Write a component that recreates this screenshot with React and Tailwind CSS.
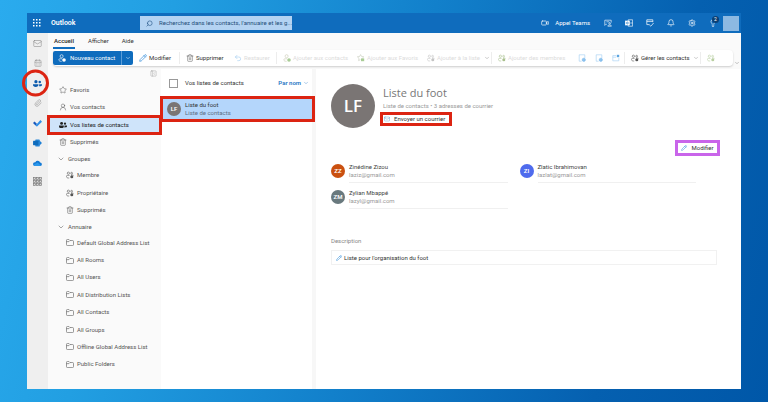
import {
  Bell,
  CalendarDays,
  ChevronDown,
  Lightbulb,
  Mail,
  PanelLeftClose,
  Paperclip,
  Pencil,
  Search,
  Settings,
  Star,
  Trash2,
  Undo2,
  UserRound,
  Video,
} from "lucide-react";

const Waffle = () => (
  <svg viewBox="0 0 8 8" className="size-2 fill-current" aria-hidden="true">
    {[0, 3, 6].map((y) =>
      [0, 3, 6].map((x) => <rect key={`${x}-${y}`} x={x} y={y} width="1.5" height="1.5" />)
    )}
  </svg>
);

const People = ({ className = "size-[9px]" }) => (
  <svg viewBox="0 0 20 16" className={`${className} fill-current`} aria-hidden="true">
    <circle cx="6.5" cy="4" r="3.6" />
    <path d="M0 9.5h12v2c0 2.5-2 4-6 4s-6-1.5-6-4z" />
    <circle cx="15" cy="4.6" r="2.8" />
    <path d="M13.8 9.5H20v1.6c0 2-1.8 3.2-6.8 3 .6-1 .6-2.6.6-4.6z" />
  </svg>
);

// outlined pair of people with a small badge in the corner
const PeopleBadge = ({ className = "" }) => (
  <svg viewBox="0 0 20 18" className={`size-2 shrink-0 ${className}`} fill="none" stroke="currentColor" strokeWidth="1.5" aria-hidden="true">
    <circle cx="6" cy="4.5" r="2.8" />
    <circle cx="14" cy="4.5" r="2.2" />
    <path d="M9 10H3.5C2 10 1 11 1 12.5 1 15 3 16.500 6 16.500h2M12.500 9h4c1.500 0 2 .6 2 1.500" />
    <circle cx="14.5" cy="13.5" r="3.8" fill="currentColor" stroke="none" />
  </svg>
);

const PersonAdd = ({ className = "", badge = "currentColor" }) => (
  <svg viewBox="0 0 20 20" className={`size-2 shrink-0 ${className}`} fill="none" stroke="currentColor" strokeWidth="1.6" aria-hidden="true">
    <circle cx="9" cy="5.5" r="3.8" />
    <path d="M10 12H4.5C3 12 2 13 2 14.5 2 17 5 18.5 9 18.5" />
    <circle cx="15" cy="15" r="4.5" fill={badge} stroke="none" />
  </svg>
);

const StarAdd = () => (
  <svg viewBox="0 0 20 20" className="size-2 shrink-0" fill="none" stroke="#c5c9b8" strokeWidth="1.5" aria-hidden="true">
    <path d="M13 11l4-4-5.5-.8L9 1.5 6.5 6.2 1 7l4 4-1 5.5 4.5-2.5" />
    <rect x="10" y="11" width="8" height="7" fill="#a9cc96" stroke="none" />
  </svg>
);

const CardAction = ({ out }) => (
  <svg viewBox="0 0 20 20" className="size-2" fill="none" stroke="#a5cff2" strokeWidth="1.6" aria-hidden="true">
    {out ? (
      <>
        <path d="M10 4H2v13h15v-7M2 8h8" />
        <path d="M12 2h6v6h-6z" fill="#5ba5e0" stroke="none" />
      </>
    ) : (
      <>
        <path d="M9 18H3V2h14v8" />
        <circle cx="14.5" cy="14.5" r="4" fill="#8fc3ee" stroke="#7db8ea" />
      </>
    )}
  </svg>
);

const TodoLogo = () => (
  <svg viewBox="0 0 20 16" className="h-2 w-[9px]" aria-hidden="true">
    <path d="M0 8l3.5-3.5L9 10l-3.5 3.5z" fill="#185abd" />
    <path d="M5.5 13.5L16.5 1.5 20 5 9 16H8z" fill="#2f8fe8" />
  </svg>
);

const TeamsLogo = () => (
  <svg viewBox="0 0 20 18" className="h-2 w-[9px]" aria-hidden="true">
    <rect x="5" y="1" width="10" height="16" rx="1" fill="#2b88d8" />
    <rect x="0" y="4" width="12" height="10" rx="1" fill="#0f6cbd" />
    <path d="M14 3l6 6-6 6z" fill="#1b7fd6" />
  </svg>
);

const CloudLogo = () => (
  <svg viewBox="0 0 20 14" className="h-[6px] w-[9px]" aria-hidden="true">
    <path d="M5 5a6 6 0 0111 1 4 4 0 01.5 8H4A4.2 4.2 0 014 5z" fill="#1378d4" />
    <path d="M1 11l9-5 8 6a4 4 0 01-2 2H4a4 4 0 01-3-3z" fill="#2a97ea" />
  </svg>
);

const AppsGrid = () => (
  <svg viewBox="0 0 18 18" className="size-[9px]" fill="#d8d8d8" stroke="#777" strokeWidth="1.3" aria-hidden="true">
    {[1, 7, 13].map((y) =>
      [1, 7, 13].map((x) => <rect key={`${x}-${y}`} x={x} y={y} width="4" height="4" />)
    )}
  </svg>
);

const OutlookLogo = () => (
  <svg viewBox="0 0 20 20" className="size-2" fill="none" stroke="currentColor" strokeWidth="1.6" aria-hidden="true">
    <rect x="1" y="5" width="10" height="10" fill="currentColor" />
    <circle cx="6" cy="10" r="2.3" stroke="#0f6cbd" />
    <path d="M8 5V2h11v16H8v-3M13 10h6" />
  </svg>
);

const ChatPerson = () => (
  <svg viewBox="0 0 20 18" className="size-2" fill="none" stroke="currentColor" strokeWidth="1.6" aria-hidden="true">
    <path d="M7 12H5l-3 3V2h16v6M6 6h7" />
    <circle cx="14" cy="10" r="2" />
    <path d="M9.5 17c0-2 1.5-3 4.5-3s4.5 1 4.5 3z" />
  </svg>
);

const DayCheck = () => (
  <svg viewBox="0 0 20 20" className="size-2" fill="none" stroke="currentColor" strokeWidth="1.8" aria-hidden="true">
    <path d="M8 14H2V2h15v6M2 6h15" />
    <path d="M8 14l4 4 7-8" />
  </svg>
);

const FolderTab = () => (
  <svg viewBox="0 0 18 16" className="h-[7px] w-2 shrink-0" fill="none" stroke="#666" strokeWidth="1.5" aria-hidden="true">
    <path d="M1 3c0-1 .5-2 2-2h3.500L9 3.500h6c1.300 0 2 .7 2 2V13c0 1.300-.7 2-2 2H3c-1.300 0-2-.7-2-2zM1 6h5.500L9 3.500" />
  </svg>
);

const ToolSeparator = () => <span className="h-3 w-px shrink-0 bg-[#ededed]" />;

function Tool({ icon, label, width, muted, chevron }) {
  return (
    <button
      type="button"
      className={`flex h-4 shrink-0 items-center gap-[2px] pl-[6px] whitespace-nowrap ${width} ${muted ? "text-[#dcdcdc]" : "text-[#333]"}`}
    >
      {icon}
      {label}
      {chevron && <ChevronDown className="ml-[2px] size-[6px] text-[#999]" />}
    </button>
  );
}

function NavRow({ icon, label, nested, active }) {
  return (
    <li className="flex flex-1">
      <a
        href="#"
        className={`flex flex-1 items-center gap-[3px] whitespace-nowrap ${nested ? "pl-[18px]" : "pl-[11px]"} ${
          active ? "relative bg-[#cfe4fa] text-[#222] outline-3 -outline-offset-2 outline-[#dc2412]" : ""
        }`}
      >
        {icon}
        {label}
      </a>
    </li>
  );
}

function NavHeading({ label }) {
  return (
    <button type="button" className="flex h-[15px] items-center gap-[3px] pl-[9px]">
      <ChevronDown className="size-2" strokeWidth={1.5} />
      {label}
    </button>
  );
}

const addressLists = [
  "Default Global Address List",
  "All Rooms",
  "All Users",
  "All Distribution Lists",
  "All Contacts",
  "All Groups",
  "Offline Global Address List",
  "Public Folders",
];

const members = [
  { initials: "ZZ", name: "Zinédine Zizou", email: "laziz@gmail.com", color: "bg-[#ca5010]" },
  { initials: "ZI", name: "Zlatic Ibrahimovan", email: "lazlat@gmail.com", color: "bg-[#4f6bed]" },
  { initials: "ZM", name: "Zylian Mbappé", email: "lazyl@gmail.com", color: "bg-[#69797e]" },
];

function Header() {
  return (
    <header className="flex h-5 items-center bg-[#0f6cbd] pr-[2px] text-white">
      <button type="button" aria-label="Applications" className="flex w-6 justify-center pr-1">
        <Waffle />
      </button>
      <span className="w-[89px] text-[7px] font-semibold">Outlook</span>
      <label className="flex h-[14px] w-[152px] items-center gap-[6px] bg-[#b4d3f2] pl-[6px] text-[#1f4f82]">
        <Search className="size-[7px] shrink-0 -scale-x-100" />
        <input
          type="text"
          aria-label="Rechercher"
          placeholder="Recherchez dans les contacts, l'annuaire et les g..."
          className="min-w-0 flex-1 placeholder:text-[#244d78] outline-none"
        />
      </label>
      <button type="button" className="ml-auto flex items-center gap-[6px] pr-[7px] whitespace-nowrap">
        <Video className="size-2" />
        Appel Teams
      </button>
      {[
        { label: "Conversations", icon: <ChatPerson /> },
        { label: "Outlook", icon: <OutlookLogo /> },
        { label: "Ma journée", icon: <DayCheck /> },
        { label: "Notifications", icon: <Bell className="size-2" /> },
        { label: "Paramètres", icon: <Settings className="size-2" /> },
      ].map((item) => (
        <button key={item.label} type="button" aria-label={item.label} className="flex w-[21px] justify-center">
          {item.icon}
        </button>
      ))}
      <button type="button" aria-label="Conseils" className="relative flex w-[21px] justify-center">
        <Lightbulb className="size-2" />
        <span className="absolute -top-[3px] right-1 flex size-[7px] items-center justify-center rounded-full bg-[#0b3f73] text-[5px] leading-none">
          2
        </span>
      </button>
      <span className="h-[15px] w-4 bg-[#8db9e2]" />
    </header>
  );
}

function Rail() {
  return (
    <nav aria-label="Modules" className="flex w-[21px] shrink-0 flex-col items-center bg-[#efefef] text-[#8a8a8a]">
      <a href="#" aria-label="Courrier" className="flex h-5 items-center">
        <Mail className="size-[9px]" strokeWidth={1.5} />
      </a>
      <a href="#" aria-label="Calendrier" className="flex h-5 items-center">
        <CalendarDays className="size-2" strokeWidth={1.5} />
      </a>
      <a href="#" aria-label="Contacts" className="relative z-10 flex h-5 items-center text-[#0f5cad]">
        <People />
        <span className="absolute top-1/2 -left-[11px] size-[27px] -translate-y-1/2 rounded-full border-3 border-[#dc2412]" />
      </a>
      <a href="#" aria-label="Fichiers" className="flex h-5 items-center">
        <Paperclip className="size-2" strokeWidth={1.5} />
      </a>
      <a href="#" aria-label="To Do" className="flex h-5 items-center">
        <TodoLogo />
      </a>
      <a href="#" aria-label="Teams" className="flex h-5 items-center">
        <TeamsLogo />
      </a>
      <a href="#" aria-label="OneDrive" className="flex h-5 items-center">
        <CloudLogo />
      </a>
      <a href="#" aria-label="Plus d'applications" className="flex h-4 items-center">
        <AppsGrid />
      </a>
    </nav>
  );
}

function Ribbon() {
  return (
    <div className="bg-[#fafafa] pb-[3px] pl-[5px]">
      <div className="flex h-[17px] items-center gap-[13px] text-[#333]">
        <button type="button" className="border-b-2 border-[#0f6cbd] px-[1px] leading-3 font-semibold">
          Accueil
        </button>
        <button type="button" className="border-b-2 border-transparent leading-3">
          Afficher
        </button>
        <button type="button" className="border-b-2 border-transparent leading-3">
          Aide
        </button>
      </div>
      <div className="flex items-end">
        <div className="flex h-4 min-w-0 flex-1 items-center rounded-sm bg-white shadow-[0_1px_2px_rgba(0,0,0,0.18)]">
          <div className="flex h-[14px] w-20 shrink-0 overflow-hidden rounded-[2px] bg-[#0f6cbd] text-white">
            <button type="button" className="flex flex-1 items-center gap-1 pl-[5px] whitespace-nowrap">
              <PersonAdd badge="#fff" />
              Nouveau contact
            </button>
            <button type="button" aria-label="Autres types" className="flex w-3 items-center justify-center border-l border-[#5c9dd8]">
              <ChevronDown className="size-[6px]" />
            </button>
          </div>
          <Tool width="w-[46px]" label="Modifier" icon={<Pencil className="size-2 text-[#2b88d8]" />} />
          <ToolSeparator />
          <Tool width="w-12" label="Supprimer" icon={<Trash2 className="size-2 text-[#555]" strokeWidth={1.5} />} />
          <Tool width="w-12" muted label="Restaurer" icon={<Undo2 className="size-2 text-[#a9d0f2]" />} />
          <ToolSeparator />
          <Tool width="w-[74px]" muted label="Ajouter aux contacts" icon={<PersonAdd className="text-[#cdcdb8]" badge="#a9cc96" />} />
          <Tool width="w-[70px]" muted label="Ajouter aux Favoris" icon={<StarAdd />} />
          <Tool width="w-[70px]" muted chevron label="Ajouter à la liste" icon={<PeopleBadge className="text-[#c4c4c4]" />} />
          <ToolSeparator />
          <Tool width="w-[81px]" muted label="Ajouter des membres" icon={<PeopleBadge className="text-[#a9c08e]" />} />
          {["Modifier la carte", "Supprimer la carte", "Partager"].map((label) => (
            <button key={label} type="button" aria-label={label} className="flex w-[17px] shrink-0 justify-center">
              <CardAction out={label === "Partager"} />
            </button>
          ))}
          <ToolSeparator />
          <Tool width="w-[75px]" chevron label="Gérer les contacts" icon={<PeopleBadge className="text-[#555]" />} />
          <ToolSeparator />
          <button type="button" aria-label="Groupe" className="flex shrink-0 pl-[6px]">
            <PeopleBadge className="text-[#b9cfa2]" />
          </button>
        </div>
        <button type="button" aria-label="Options du ruban" className="flex w-2 justify-center">
          <ChevronDown className="size-[6px] text-[#888]" />
        </button>
      </div>
    </div>
  );
}

function Sidebar() {
  return (
    <nav aria-label="Dossiers" className="flex w-[113px] shrink-0 flex-col bg-[#fafafa] pb-4 text-[#555]">
      <button type="button" aria-label="Réduire" className="flex h-3 items-start self-end pt-px pr-1">
        <PanelLeftClose className="size-[7px] text-[#999]" strokeWidth={1.5} />
      </button>
      <ul className="flex h-[70px] flex-col">
        <NavRow label="Favoris" icon={<Star className="size-2" strokeWidth={1.5} />} />
        <NavRow label="Vos contacts" icon={<UserRound className="size-2" strokeWidth={1.5} />} />
        <NavRow active label="Vos listes de contacts" icon={<People className="size-2" />} />
        <NavRow label="Supprimés" icon={<Trash2 className="size-2" strokeWidth={1.5} />} />
      </ul>
      <NavHeading label="Groupes" />
      <ul className="flex h-[53px] flex-col">
        <NavRow nested label="Membre" icon={<PeopleBadge />} />
        <NavRow nested label="Propriétaire" icon={<PeopleBadge />} />
        <NavRow nested label="Supprimés" icon={<Trash2 className="size-2" strokeWidth={1.5} />} />
      </ul>
      <NavHeading label="Annuaire" />
      <ul className="flex h-[139px] flex-col">
        {addressLists.map((name) => (
          <NavRow key={name} nested label={name} icon={<FolderTab />} />
        ))}
      </ul>
    </nav>
  );
}

function ContactLists() {
  return (
    <section className="w-[151px] shrink-0 bg-white text-[#333]">
      <div className="flex h-7 items-center pr-[3px] pl-2">
        <label className="flex items-center gap-[7px]">
          <input type="checkbox" className="size-[9px] appearance-none border border-[#999] bg-white" />
          Vos listes de contacts
        </label>
        <button type="button" className="ml-auto flex items-center gap-[2px] font-semibold text-[#2776c4]">
          Par nom
          <ChevronDown className="size-[6px]" strokeWidth={1.5} />
        </button>
      </div>
      <a
        href="#"
        className="relative z-10 flex h-6 w-[153px] items-center gap-1 bg-[#b4d6fb] pl-[6px] outline-3 -outline-offset-2 outline-[#dc2412]"
      >
        <span className="flex size-[14px] items-center justify-center rounded-full bg-[#7a7574] font-semibold text-white">
          LF
        </span>
        <span>
          <span className="block">Liste du foot</span>
          <span className="block text-[#5d6f83]">Liste de contacts</span>
        </span>
      </a>
    </section>
  );
}

function Member({ member }) {
  return (
    <li className="flex h-[26px] gap-1">
      <span className={`mt-[7px] flex size-[14px] shrink-0 items-center justify-center rounded-full font-semibold text-white ${member.color}`}>
        {member.initials}
      </span>
      <span className="flex-1 border-b border-[#f0f0f0] pt-[6px]">
        <span className="block text-[#444]">{member.name}</span>
        <span className="block text-[#999]">{member.email}</span>
      </span>
    </li>
  );
}

function ContactDetails() {
  return (
    <main className="min-w-0 flex-1 border-l-4 border-[#f7f7f7] bg-white pt-[15px] pr-[21px] pl-[15px]">
      <div className="flex gap-2">
        <span className="flex size-11 shrink-0 items-center justify-center rounded-full bg-[#7a7574] font-['Open_Sans',sans-serif] text-[17px] font-semibold text-white">
          LF
        </span>
        <div className="flex flex-col items-start">
          <h1 className="font-['Open_Sans',sans-serif] text-[11px] leading-[18px] text-[#777]">Liste du foot</h1>
          <p className="text-[#999]">Liste de contacts • 3 adresses de courrier</p>
          <button
            type="button"
            className="mt-[5px] flex h-2 items-center gap-1 pr-1 pl-px whitespace-nowrap text-[#333] outline-3 outline-[#dc2412]"
          >
            <Mail className="size-[6px] text-[#4a90c8]" strokeWidth={1.5} />
            Envoyer un courrier
          </button>
        </div>
      </div>
      <div className="flex justify-end pt-3">
        <button
          type="button"
          className="flex h-4 w-[45px] items-center justify-center gap-1 border-3 border-[#c965ea] text-[#333]"
        >
          <Pencil className="size-[6px] text-[#2b88d8]" />
          Modifier
        </button>
      </div>
      <ul className="grid grid-cols-2 gap-x-3 pt-px pr-6">
        {members.map((member) => (
          <Member key={member.initials} member={member} />
        ))}
      </ul>
      <h2 className="mt-[27px] mb-1 leading-[10px] text-[#888]">Description</h2>
      <p className="mr-[3px] flex h-[15px] items-center gap-[2px] border border-[#f1f1f1] pl-1 text-[#333]">
        <Pencil className="size-[6px] text-[#2b88d8]" />
        Liste pour l'organisation du foot
      </p>
    </main>
  );
}

export default function App() {
  return (
    <div className="flex min-h-screen bg-[linear-gradient(105deg,#2aabee_0%,#229fe2_20%,#1280cb_50%,#0560b0_80%,#0057a8_100%)] px-[27px] py-[13px] font-[Roboto,'Open_Sans',sans-serif] text-[6px] leading-2">
      <div className="flex flex-1 flex-col bg-white">
        <Header />
        <div className="flex flex-1">
          <Rail />
          <div className="flex min-w-0 flex-1 flex-col">
            <Ribbon />
            <div className="flex flex-1">
              <Sidebar />
              <ContactLists />
              <ContactDetails />
            </div>
          </div>
        </div>
      </div>
    </div>
  );
}
